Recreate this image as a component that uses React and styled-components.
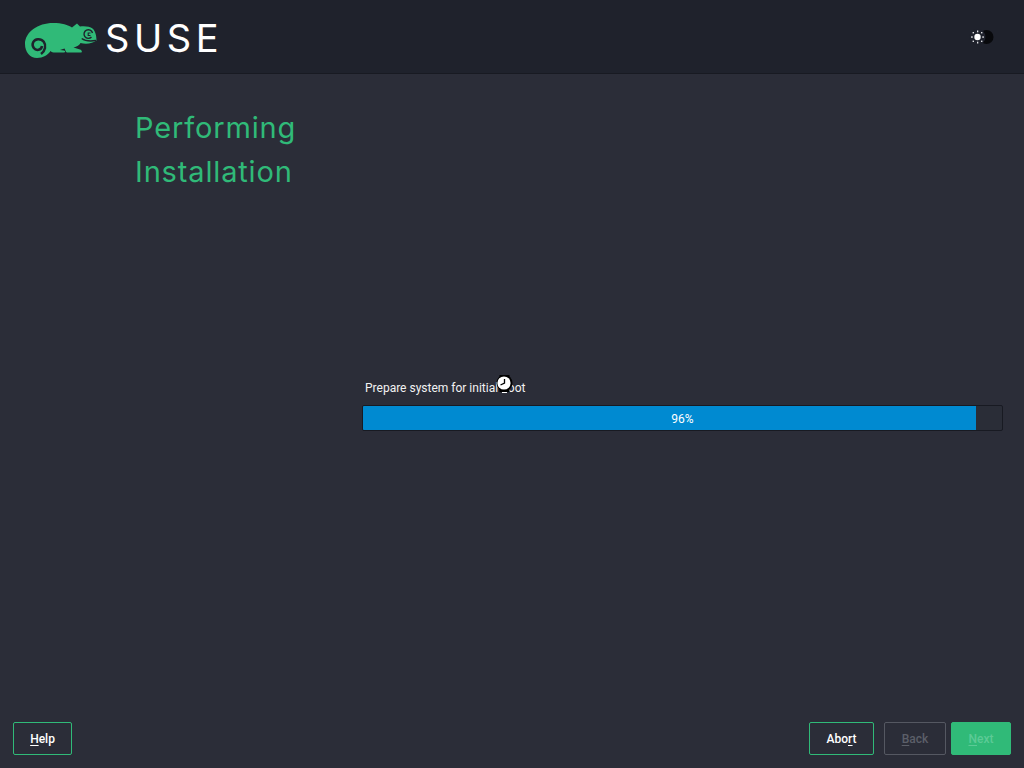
import React from "react";
import styled, { createGlobalStyle } from "styled-components";

const Global = createGlobalStyle`
  html, body { margin: 0; padding: 0; height: 100%; background: #2b2d38; }
  #root { height: 100%; }
`;
const Page = styled.div`
  width: 1024px; height: 768px; display: flex; flex-direction: column;
  background: #2b2d38; color: #fff; font-family: Roboto, sans-serif; overflow: hidden; position: relative;
`;
const Header = styled.header`
  height: 73px; flex: none; display: flex; align-items: center; justify-content: space-between;
  padding: 0 29px 0 25px; background: #1f222c; border-bottom: 1px solid #181a22;
`;
const Brand = styled.div`display: flex; align-items: flex-start; gap: 8px; padding-top: 8px;`;
const Wordmark = styled.span`
  font-family: Inter, sans-serif; font-weight: 400; font-size: 38px; letter-spacing: 4.6px; line-height: 1; color: #fff; margin-top: -4px;
`;
const Content = styled.main`
  flex: 1; display: grid; grid-template-columns: 362px 641px; min-height: 0;
`;
const Heading = styled.h1`
  margin: 32px 0 0 135px; font-family: Inter, sans-serif; font-weight: 400; font-size: 29px; letter-spacing: 0.85px; line-height: 44px; color: #30ba78; width: 190px;
`;
const ProgressArea = styled.div`padding-top: 307px; position: relative;`;
const Label = styled.div`font-size: 12px; line-height: 14px; padding-left: 3px; margin-bottom: 10px; color: #f2f2f2;`;
const Track = styled.div`
  height: 26px; box-sizing: border-box; border: 1px solid #181a22; border-radius: 2px; background: #2a2d37; overflow: hidden; position: relative;
`;
const Fill = styled.div`height: 100%; background: #008ad1;`;
const Percent = styled.span`
  position: absolute; inset: 0; padding-top: 1px; display: flex; align-items: center; justify-content: center; font-size: 12px; color: #fff;
`;
const Footer = styled.footer`
  flex: none; display: flex; justify-content: space-between; padding: 0 13px 13px;
`;
const ButtonRow = styled.div`display: flex; gap: 5px;`;
const Button = styled.button`
  height: 33px; width: ${p => p.$w}px; margin-right: ${p => p.$mr || 0}px; box-sizing: border-box;
  border-radius: 2px; font: 500 12px Roboto, sans-serif; padding: 0;
  border: 1px solid ${p => p.$variant === "disabled" ? "#555862" : "#30ba78"};
  background: ${p => p.$variant === "primary" ? "#30ba78" : "transparent"};
  color: ${p => p.$variant === "outline" ? "#fff" : p.$variant === "disabled" ? "#5c5f69" : "#5cca96"};
  u { text-underline-offset: 2px; }
`;
const CursorBox = styled.div`position: absolute; left: 495px; top: 373px; line-height: 0;`;

const Chameleon = () => (
  <svg width="72" height="36" viewBox="25 23 72 36">
    <path fill="#30ba78" d="M25 44C25 32 38 23 53 23C62 23 68 25 72 27.5L77 23.5L80 26.5C85 26 90 26.5 92.5 28.5C95 30.5 96.5 35 96.5 40.5C93 43.5 86 44.5 80.5 43C79.5 45 77 46.5 73.5 47.5L80 49.5C82 50 82.5 52.5 81 52.5H67C65.5 52.5 65.5 50 64.5 48.5L60 50L64 50.5C65.5 51 65.5 52.5 64 52.5H55C53 52.5 51.5 52 50.5 51C48 55 43 58 37 58C30 58 25 52 25 44Z" />
    <path fill="none" stroke="#1f222c" strokeWidth="2.5" d="M42 46C41.5 50.5 36 51 33.8 48C31 44 33.5 39.5 38 39.2C43 39 46 43.5 45 48C44.5 50.5 43 52.5 41 54" />
    <path fill="none" stroke="#1f222c" strokeWidth="1.4" d="M91.5 37A4.3 4.3 0 1 1 92.5 33" />
    <path fill="none" stroke="#1f222c" strokeWidth="1.1" d="M90.5 33H88.2V35.5H90.5" />
    <path fill="none" stroke="#1f222c" strokeWidth="1.3" d="M81.7 38.5C85 41 90 41.5 96 40.5" />
  </svg>
);

const ThemeIcon = () => (
  <svg width="26" height="18" viewBox="0 0 26 18">
    <circle cx="17.5" cy="9" r="7" fill="#08090c" />
    <circle cx="8.5" cy="9" r="8" fill="#1f222c" />
    <circle cx="8.5" cy="9" r="3.2" fill="#fff" />
    <g fill="#dfe0e3">
      <rect x="8" y="2.5" width="1.3" height="1.8" /><rect x="8" y="13.7" width="1.3" height="1.8" />
      <rect x="2" y="8.4" width="1.8" height="1.3" /><rect x="13.2" y="8.4" width="1.8" height="1.3" />
      <rect x="3.6" y="4" width="1.4" height="1.4" /><rect x="12" y="4" width="1.4" height="1.4" />
      <rect x="3.6" y="12.6" width="1.4" height="1.4" /><rect x="12" y="12.6" width="1.4" height="1.4" />
    </g>
  </svg>
);

const WatchCursor = () => (
  <svg width="20" height="21" viewBox="0 0 20 21">
    <rect x="4.5" y="2" width="10" height="17" fill="#000" />
    <circle cx="9.5" cy="10" r="8" fill="#000" />
    <circle cx="9" cy="10" r="6.6" fill="#fff" />
    <path d="M9.5 6V10L5.5 12" fill="none" stroke="#000" strokeWidth="1.3" />
    <path d="M7 19.5H12" stroke="#fff" strokeWidth="1" />
  </svg>
);

export default function App() {
  const pct = 96;
  return (
    <Page>
      <Global />
      <Header>
        <Brand><Chameleon /><Wordmark>SUSE</Wordmark></Brand>
        <ThemeIcon />
      </Header>
      <Content>
        <Heading>Performing Installation</Heading>
        <ProgressArea>
          <Label>Prepare system for initial boot</Label>
          <Track>
            <Fill style={{ width: `${pct}%` }} />
            <Percent>{pct}%</Percent>
          </Track>
        </ProgressArea>
      </Content>
      <Footer>
        <Button $w={59} $variant="outline"><u>H</u>elp</Button>
        <ButtonRow>
          <Button $w={65} $mr={5} $variant="outline">Abo<u>r</u>t</Button>
          <Button $w={62} $variant="disabled"><u>B</u>ack</Button>
          <Button $w={60} $variant="primary"><u>N</u>ext</Button>
        </ButtonRow>
      </Footer>
      <CursorBox><WatchCursor /></CursorBox>
    </Page>
  );
}
